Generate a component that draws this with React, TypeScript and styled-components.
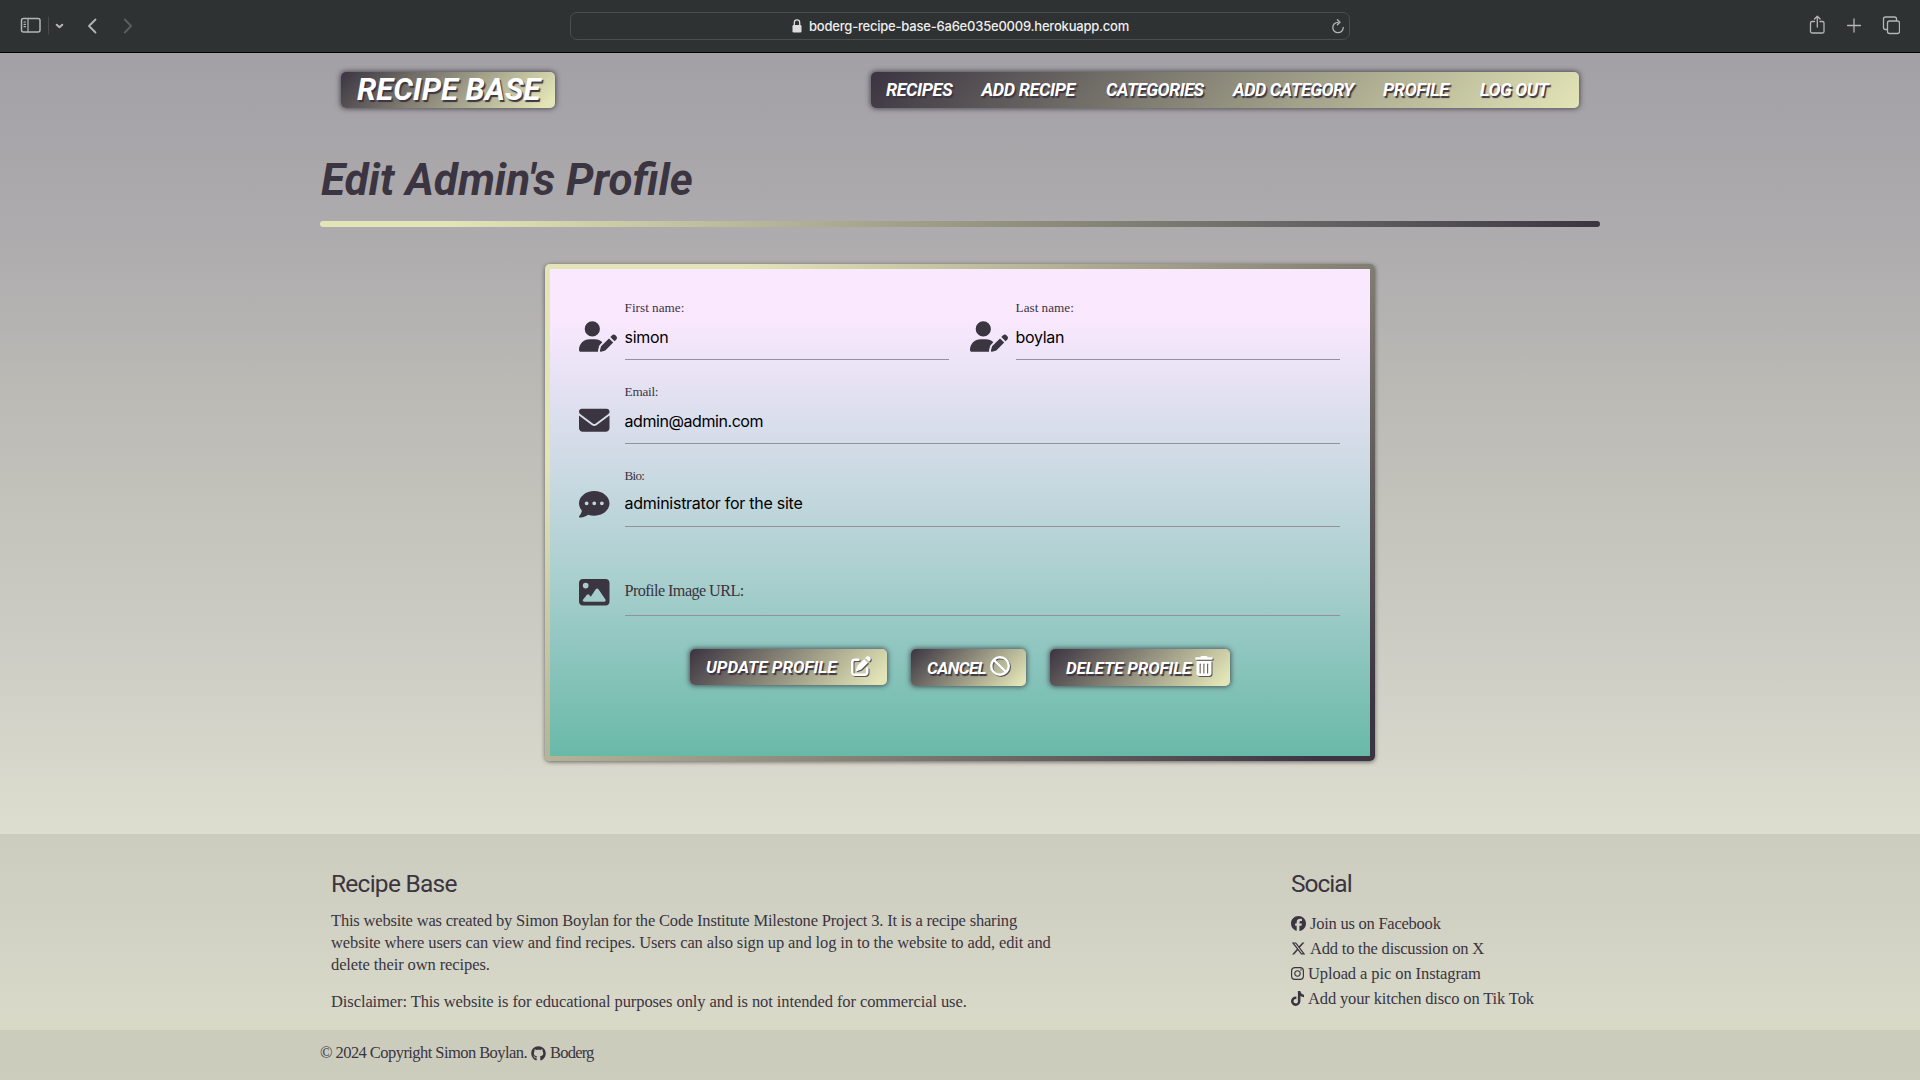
import React from "react";
import styled, { createGlobalStyle } from "styled-components";
import { FaUserPen, FaEnvelope, FaCommentDots, FaImage, FaPenToSquare, FaBan, FaTrashCan, FaFacebook, FaXTwitter, FaInstagram, FaTiktok, FaGithub } from "react-icons/fa6";

const ink = "#3b3441";
const cream = "#e3e5b7";
const display = 'Roboto, "Liberation Sans", sans-serif';
const serif = '"Liberation Serif", serif';

const Global = createGlobalStyle`
  * { box-sizing: border-box; }
  body { margin: 0; color: ${ink}; font-family: ${serif}; }
`;
const Page = styled.div`
  width: 1920px; height: 1080px; overflow: hidden;
  display: flex; flex-direction: column;
`;
const Toolbar = styled.header`
  height: 53px; flex: none; display: flex; align-items: center; justify-content: space-between;
  background: #2e3233; border-bottom: 1px solid #000; padding-bottom: 1px;
`;
const ToolGroup = styled.div<{ $right?: boolean }>`
  width: 200px; height: 25px; display: flex; align-items: flex-start;
  justify-content: ${p => (p.$right ? "flex-end" : "flex-start")};
  padding: ${p => (p.$right ? "0 20px 0 0" : "0 0 0 20px")};
  svg { display: block; }
`;
const Address = styled.div`
  width: 780px; height: 28px; border: 1px solid #4a4e4f; border-radius: 7px;
  display: flex; align-items: center; padding: 0 4px 0 221px; color: #eee;
  font: 500 13px/26px Inter, sans-serif;
`;
const Host = styled.span`letter-spacing: -0.21px; margin-left: 7px; flex: 1; white-space: nowrap;`;
const Site = styled.div`
  flex: 1; display: flex; flex-direction: column;
  background: linear-gradient(180deg, #a3a0a6 0%, #b0adaf 20%, #bab9b4 32%, #cfcfc6 60.5%, #dddecf 76%, #ecedda 95%, #eeefdb 100%);
`;
const Container = styled.div`width: 1280px; margin: 0 auto;`;
const HeaderRow = styled(Container)`
  display: flex; justify-content: space-between; padding: 19px 21px 0;
`;
const plate = `
  background: linear-gradient(135deg, ${ink} 0%, ${cream} 95%);
  border-radius: 5px; box-shadow: 0 0 5px 1px rgba(45,40,52,.7);
  color: #fff; font-family: ${display}; font-weight: 700; font-style: italic;
  text-shadow: 1.5px 1.5px 1px ${ink}; white-space: nowrap;
`;
const Logo = styled.a`
  ${plate} width: 214px; height: 36px; padding-left: 16px; font-size: 31px; line-height: 35px; letter-spacing: 0;
`;
const Nav = styled.nav`
  ${plate} background: linear-gradient(135deg, ${ink} 0%, ${cream} 100%);
  width: 708px; height: 36px; display: flex; padding-left: 15px; font-size: 18px; line-height: 35px;
`;
const NavLink = styled.a<{ $w: number; $ls: number }>`width: ${p => p.$w}px; letter-spacing: ${p => p.$ls}px;`;
const Title = styled.h1`
  margin: 42px 0 0; height: 71px; padding-left: 1px; font: italic 700 44px/61px ${display}; white-space: nowrap;
`;
const Rule = styled.div`
  height: 6px; border-radius: 3px; background: linear-gradient(90deg, ${cream} 10%, #5b595c 83%, ${ink} 100%);
`;
const Frame = styled.section`
  width: 830px; height: 497px; margin: 37px auto 0; padding: 5px; border-radius: 5px;
  background: linear-gradient(135deg, ${cream} 15%, ${ink} 96%);
  box-shadow: 0 1px 4px rgba(40,36,46,.65);
`;
const Form = styled.form`
  height: 487px; padding: 34px 30px 0 29px;
  background: linear-gradient(180deg, #fae8ff 0%, #fae8ff 10%, #afd1d2 60%, #69b9a8 100%);
`;
const FieldRow = styled.div<{ $h: number }>`height: ${p => p.$h}px; display: flex; justify-content: space-between;`;
const Field = styled.label<{ $w?: number }>`
  width: ${p => (p.$w ? p.$w + "px" : "100%")}; display: flex;
`;
const IconCell = styled.span<{ $top: number }>`
  width: 46px; flex: none; padding-top: ${p => p.$top}px; color: ${ink};
  svg { display: block; }
`;
const PersonIcon = styled(FaUserPen)`width: 38px; height: 31px;`;
const FieldBody = styled.span<{ $h: number }>`
  flex: 1; height: ${p => p.$h}px; border-bottom: 1px solid #949297; display: flex; flex-direction: column;
`;
const Caption = styled.span<{ $ls?: number; $h?: number }>`
  height: ${p => p.$h ?? 24}px; margin-left: -0.4px; font-size: 13.2px; line-height: 10px; letter-spacing: ${p => p.$ls ?? 0}px;
`;
const Value = styled.span<{ $ls: number }>`
  margin-left: -0.5px; color: #000; font: 400 16px/20px Inter, sans-serif; letter-spacing: ${p => p.$ls}px;
`;
const Placeholder = styled.span`margin-left: -0.5px; font-size: 16.2px; line-height: 20px; padding-top: 26px; letter-spacing: -0.57px;`;
const Actions = styled.div`display: flex; gap: 24px; padding-left: 111px;`;
const Action = styled.button<{ $w: number; $h: number; $ls?: number }>`
  ${plate} border: 0; width: ${p => p.$w}px; height: ${p => p.$h}px; padding: 0 16.5px 0 16px;
  display: flex; align-items: center; justify-content: space-between;
  font-size: 17px; letter-spacing: ${p => p.$ls ?? 0}px;
  svg { display: block; flex: none; filter: drop-shadow(1.5px 1.5px 0 #55515a); margin-top: -3px; }
`;
const Footer = styled.footer`
  margin-top: auto; height: 246px; background: rgba(51,51,51,.1); display: flex; flex-direction: column;
`;
const FooterMain = styled(Container)`height: 196px; padding: 33px 11px 0; display: flex;`;
const About = styled.div`width: 960px; white-space: nowrap;`;
const FootTitle = styled.h5<{ $ls: number }>`
  margin: 0; font: 400 24.5px/33px ${display}; height: 43px; letter-spacing: ${p => p.$ls}px;
`;
const Line = styled.div<{ $ls: number }>`font-size: 16.5px; line-height: 22px; letter-spacing: ${p => p.$ls}px;`;
const Disclaimer = styled(Line)`margin-top: 15px;`;
const Social = styled.div`display: flex; flex-direction: column; white-space: nowrap;`;
const SocialLink = styled.a<{ $ls: number; $icon?: number }>`
  display: flex; align-items: center; height: 25px; padding-top: 2px; font-size: 16.5px; gap: 4px; letter-spacing: ${p => p.$ls}px;
  svg { width: ${p => p.$icon ?? 15}px; height: 15px; }
`;
const Copyright = styled.div`height: 50px; background: rgba(51,51,51,.08);`;
const CopyLine = styled(Container)`
  display: flex; align-items: center; height: 46px; font-size: 16.5px; gap: 4px; white-space: nowrap; letter-spacing: -0.56px;
`;
const Handle = styled.span`letter-spacing: -0.8px;`;

const stroke = { fill: "none", stroke: "#b4b6b6", strokeWidth: 1.5, strokeLinecap: "round", strokeLinejoin: "round" } as const;

export default function App() {
  return (
    <Page>
      <Global />
      <Toolbar>
        <ToolGroup>
          <svg width="120" height="24" viewBox="20 13 120 24" {...stroke}>
            <rect x="21.500" y="18.500" width="18.500" height="13.500" rx="2" />
            <path d="M28 18.500v13.500M24 22h1.500M24 24.300h1.500M24 26.600h1.500" strokeWidth="1.200" />
            <path d="M48.500 17v17" stroke="#484c4d" strokeWidth="1" />
            <path d="M56.700 24.700l2.800 2.600 2.800-2.600" strokeWidth="2" />
            <path d="M95.500 19.500l-6.500 6.500 6.500 6.500" strokeWidth="1.800" />
            <path d="M124.800 19.500l6.300 6.500-6.300 6.500" stroke="#5b5f60" strokeWidth="1.800" />
          </svg>
        </ToolGroup>
        <Address>
          <svg width="10" height="14" viewBox="0 0 10 14"><rect x=".5" y="6" width="9" height="7.5" rx="1.3" fill="#ddd" /><path d="M2.3 6V3.6a2.7 2.7 0 0 1 5.4 0V6" fill="none" stroke="#ddd" strokeWidth="1.3" /></svg>
          <Host>boderg-recipe-base-6a6e035e0009.herokuapp.com</Host>
          <svg width="14" height="16" viewBox="0 0 14 16" {...stroke} strokeWidth="1.3"><path d="M7 4.300A5.200 5.200 0 1 0 12.200 9.500M6.400 1.800l2.600 2.500L6.400 6.800" /></svg>
        </Address>
        <ToolGroup $right>
          <svg width="92" height="24" viewBox="1808 13 92 24" {...stroke} strokeWidth="1.3">
            <path d="M1814.500 21.500h-2.500a1.500 1.500 0 0 0-1.500 1.500v8.500a1.500 1.500 0 0 0 1.500 1.500h10.500a1.500 1.500 0 0 0 1.500-1.500V23a1.500 1.500 0 0 0-1.500-1.500h-2.500M1817.300 27V16.500M1814.500 19l2.800-2.800 2.800 2.800" />
            <path d="M1847.500 25.500h13M1854 19v13" />
            <rect x="1887.500" y="21" width="12" height="12.500" rx="2" />
            <path d="M1887 29.500h-1.500a2 2 0 0 1-2-2v-8.500a2 2 0 0 1 2-2h9a2 2 0 0 1 2 2v1.500" />
          </svg>
        </ToolGroup>
      </Toolbar>
      <Site>
        <HeaderRow>
          <Logo>RECIPE BASE</Logo>
          <Nav>
            <NavLink $w={95.5} $ls={-0.45}>RECIPES</NavLink>
            <NavLink $w={124.5} $ls={-0.4}>ADD RECIPE</NavLink>
            <NavLink $w={127} $ls={-0.6}>CATEGORIES</NavLink>
            <NavLink $w={150} $ls={-0.55}>ADD CATEGORY</NavLink>
            <NavLink $w={97} $ls={-0.4}>PROFILE</NavLink>
            <NavLink $w={80} $ls={-0.5}>LOG OUT</NavLink>
          </Nav>
        </HeaderRow>
        <Container>
          <Title>Edit Admin's Profile</Title>
          <Rule />
        </Container>
        <Frame>
          <Form>
            <FieldRow $h={84}>
              <Field $w={370}>
                <IconCell $top={18}><PersonIcon /></IconCell>
                <FieldBody $h={57}><Caption>First name:</Caption><Value $ls={-0.3}>simon</Value></FieldBody>
              </Field>
              <Field $w={370}>
                <IconCell $top={18}><PersonIcon /></IconCell>
                <FieldBody $h={57}><Caption>Last name:</Caption><Value $ls={-0.3}>boylan</Value></FieldBody>
              </Field>
            </FieldRow>
            <FieldRow $h={84}>
              <Field>
                <IconCell $top={18}><FaEnvelope size={30.5} /></IconCell>
                <FieldBody $h={57}><Caption $ls={-0.25}>Email:</Caption><Value $ls={-0.43}>admin@admin.com</Value></FieldBody>
              </Field>
            </FieldRow>
            <FieldRow $h={84}>
              <Field>
                <IconCell $top={18}><FaCommentDots size={30.5} /></IconCell>
                <FieldBody $h={56}><Caption $h={22} $ls={-0.8}>Bio:</Caption><Value $ls={-0.26}>administrator for the site</Value></FieldBody>
              </Field>
            </FieldRow>
            <FieldRow $h={94}>
              <Field>
                <IconCell $top={22}><FaImage size={30.5} /></IconCell>
                <FieldBody $h={61}><Placeholder>Profile Image URL:</Placeholder></FieldBody>
              </Field>
            </FieldRow>
            <Actions>
              <Action type="button" $w={197} $h={36}>UPDATE PROFILE<FaPenToSquare size={20} /></Action>
              <Action type="button" $w={115} $h={37} $ls={-0.6}>CANCEL<FaBan size={20} /></Action>
              <Action type="button" $w={180} $h={37} $ls={-0.1}>DELETE PROFILE<FaTrashCan size={20} /></Action>
            </Actions>
          </Form>
        </Frame>
        <Footer>
          <FooterMain>
            <About>
              <FootTitle $ls={-0.75}>Recipe Base</FootTitle>
              <Line $ls={-0.18}>This website was created by Simon Boylan for the Code Institute Milestone Project 3. It is a recipe sharing</Line>
              <Line $ls={-0.12}>website where users can view and find recipes. Users can also sign up and log in to the website to add, edit and</Line>
              <Line $ls={-0.1}>delete their own recipes.</Line>
              <Disclaimer $ls={-0.09}>Disclaimer: This website is for educational purposes only and is not intended for commercial use.</Disclaimer>
            </About>
            <Social>
              <FootTitle $ls={-1}>Social</FootTitle>
              <SocialLink $ls={-0.24}><FaFacebook />Join us on Facebook</SocialLink>
              <SocialLink $ls={-0.2}><FaXTwitter />Add to the discussion on X</SocialLink>
              <SocialLink $ls={-0.09} $icon={13}><FaInstagram />Upload a pic on Instagram</SocialLink>
              <SocialLink $ls={-0.14} $icon={13}><FaTiktok />Add your kitchen disco on Tik Tok</SocialLink>
            </Social>
          </FooterMain>
          <Copyright><CopyLine><span>© 2024 Copyright Simon Boylan.</span><FaGithub size={15} /><Handle>Boderg</Handle></CopyLine></Copyright>
        </Footer>
      </Site>
    </Page>
  );
}
